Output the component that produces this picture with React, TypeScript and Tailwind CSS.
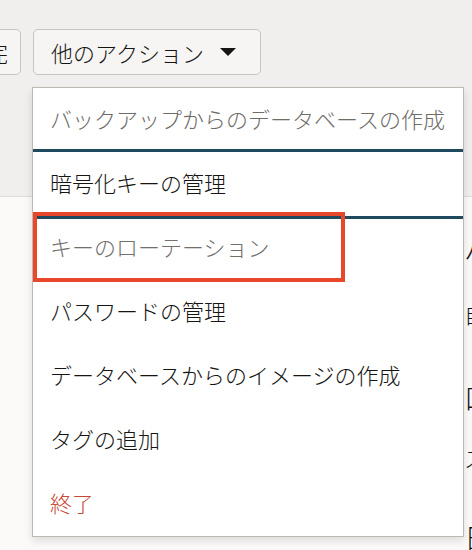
import React from "react";

const font = { fontFamily: '"Noto Sans CJK JP", "Noto Sans", sans-serif' };

export default function App() {
  const items: { label: string; cls: string; extra?: string }[] = [
    { label: "バックアップからのデータベースの作成", cls: "text-[#6e6c69]", extra: "shadow-[inset_0_-3px_0_#1f4a5e]" },
    { label: "暗号化キーの管理", cls: "text-[#161513]" },
    { label: "キーのローテーション", cls: "text-[#72706d]", extra: "shadow-[inset_0_3px_0_#1f4a5e]" },
    { label: "パスワードの管理", cls: "text-[#161513]" },
    { label: "データベースからのイメージの作成", cls: "text-[#161513]" },
    { label: "タグの追加", cls: "text-[#161513]" },
    { label: "終了", cls: "text-[#c74634]" },
  ];

  return (
    <div className="relative w-[472px] h-[550px] overflow-hidden bg-[#fbfaf9] font-light" style={font}>
      {/* top header area */}
      <div className="h-[197px] bg-[#f0efed] border-b border-[#dddbd8]">
        <div className="flex gap-3 pt-[29px] -ml-[100px]">
          <div className="w-[121px] h-[46px] rounded-[5px] border border-[#c8c4bf] bg-[#f6f5f3] flex items-center justify-end pr-3 text-[22px] text-[#161513]">
            完
          </div>
          <div className="w-[228px] h-[46px] rounded-[5px] border border-[#c8c4bf] bg-[#f6f5f3] flex items-center pl-[17px] text-[22px] leading-none text-[#161513]">
            <span>他のアクション</span>
            <svg className="ml-4" width="16" height="8" viewBox="0 0 16 8">
              <polygon points="0,0 16,0 8,8" fill="#161513" />
            </svg>
          </div>
        </div>
      </div>

      {/* page content partially visible at right */}
      <div className="flex flex-col pl-[464px] pt-[31px] text-[#161513] whitespace-nowrap">
        <div className="text-[28px] leading-[40px]">バックアップ</div>
        <div className="mt-[30px] text-[22px] leading-[30px]">自動バックアップ</div>
        <div className="mt-[49px] text-[28px] leading-[40px]">口</div>
        <div className="mt-[25px] text-[22px] leading-[30px]">ステータス</div>
        <div className="mt-[45px] text-[28px] leading-[40px]">日</div>
      </div>

      {/* dropdown menu */}
      <div className="absolute left-[32px] top-[87px] w-[432px] bg-white border border-[#bdb9b4] shadow-[0_4px_8px_rgba(0,0,0,0.12)]">
        {items.map((it) => (
          <div
            key={it.label}
            className={`h-16 flex items-center pl-[17px] pb-1 text-[22px] leading-none whitespace-nowrap ${it.cls} ${it.extra ?? ""}`}
          >
            {it.label}
          </div>
        ))}
      </div>

      {/* red annotation box */}
      <div className="absolute left-[33px] top-[212px] w-[312px] h-[70px] border-4 border-[#e9472b]" />
    </div>
  );
}
